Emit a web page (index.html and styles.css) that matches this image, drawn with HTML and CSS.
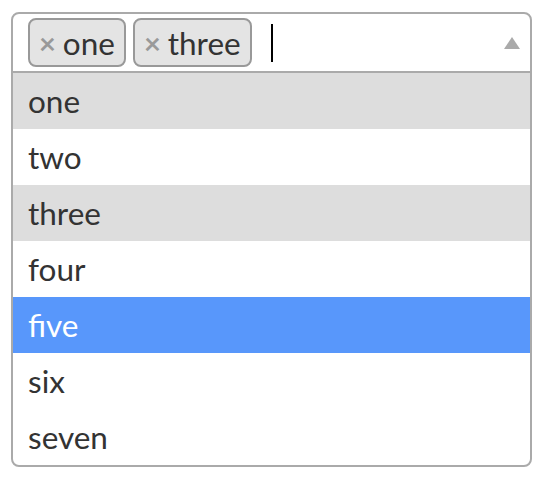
FILE: index.html
```html
<!DOCTYPE html>
<html>
<head>
<meta charset="utf-8">
<link rel="stylesheet" href="styles.css">
</head>
<body>
<div class="select">
  <div class="selection">
    <ul class="tags">
      <li class="tag"><span class="tag-x">×</span><span class="tag-label">one</span></li>
      <li class="tag"><span class="tag-x">×</span><span class="tag-label">three</span></li>
      <li class="search"><span class="cursor"></span></li>
    </ul>
    <span class="arrow"></span>
  </div>
  <ul class="options">
    <li class="option selected">one</li>
    <li class="option">two</li>
    <li class="option selected">three</li>
    <li class="option">four</li>
    <li class="option highlighted">five</li>
    <li class="option">six</li>
    <li class="option">seven</li>
  </ul>
</div>
</body>
</html>
```
FILE: styles.css
```css
html, body {
  margin: 0;
  padding: 0;
  background: #ffffff;
}
body {
  font-family: Lato, "Open Sans", sans-serif;
  color: #333333;
}
.select {
  margin: 12px 0 0 11px;
  width: 521px;
  box-sizing: border-box;
  border: 2px solid #aaaaaa;
  border-radius: 8px;
  overflow: hidden;
}
.selection {
  display: flex;
  align-items: center;
  height: 59px;
  box-sizing: border-box;
  border-bottom: 2px solid #aaaaaa;
}
.tags {
  list-style: none;
  margin: 0;
  padding: 0 0 0 15px;
  display: flex;
  align-items: center;
  gap: 7px;
  flex: 1;
}
.tag {
  display: flex;
  align-items: center;
  height: 49px;
  box-sizing: border-box;
  border: 2px solid #999999;
  border-radius: 8px;
  background: #e4e4e4;
  padding: 0 9px 0 9px;
  font-size: 31.5px;
  color: #333333;
}
.tag-x {
  color: #999999;
  font-weight: bold;
  font-size: 29px;
  margin-right: 7px;
}
.search {
  margin-left: 12px;
  display: flex;
  align-items: center;
}
.cursor {
  display: block;
  width: 2px;
  height: 38px;
  background: #000000;
}
.arrow {
  width: 0;
  height: 0;
  border-left: 8px solid transparent;
  border-right: 8px solid transparent;
  border-bottom: 12px solid #aaaaaa;
  margin-right: 10px;
}
.options {
  list-style: none;
  margin: 0;
  padding: 0;
}
.option {
  height: 56px;
  line-height: 56px;
  padding: 0 0 0 15px;
  font-size: 31.5px;
  color: #333333;
}
.option.selected {
  background: #dddddd;
}
.option.highlighted {
  background: #5897fb;
  color: #ffffff;
}
```
